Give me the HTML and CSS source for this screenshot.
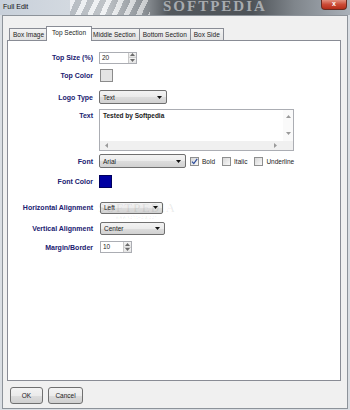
FILE: index.html
```html
<!DOCTYPE html>
<html lang="en">
<head>
    <meta charset="UTF-8">
    <title>Full Edit</title>
    <link rel="stylesheet" href="styles.css">
</head>
<body>
    <div class="titlebar">
        <span class="title">Full Edit</span>
        <span class="brand">SOFTPEDIA</span>
        <span class="close">x</span>
    </div>

    <div class="client">
        <div class="tabs">
            <div class="tab">Box Image</div>
            <div class="tab active">Top Section</div>
            <div class="tab">Middle Section</div>
            <div class="tab">Bottom Section</div>
            <div class="tab">Box Side</div>
        </div>

        <div class="panel">
            <div class="row row-size">
                <span class="label">Top Size (%)</span>
                <div class="spin spin-size">
                    <span class="spin-value">20</span>
                    <div class="spin-buttons">
                        <span class="spin-btn"><svg width="5" height="3" viewBox="0 0 5 3"><path d="M0 3L2.5 0L5 3Z" fill="#6b6b6b"/></svg></span>
                        <span class="spin-btn"><svg width="5" height="3" viewBox="0 0 5 3"><path d="M0 0L2.5 3L5 0Z" fill="#6b6b6b"/></svg></span>
                    </div>
                </div>
            </div>

            <div class="row row-color">
                <span class="label">Top Color</span>
                <span class="swatch swatch-top"></span>
            </div>

            <div class="row row-logo">
                <span class="label">Logo Type</span>
                <div class="combo combo-logo">
                    <span>Text</span>
                    <svg width="5" height="3" viewBox="0 0 5 3"><path d="M0 0L2.5 3L5 0Z" fill="#111"/></svg>
                </div>
            </div>

            <div class="row row-text">
                <span class="label label-top">Text</span>
                <div class="memo">
                    <div class="memo-text">Tested by Softpedia</div>
                    <div class="vscroll">
                        <svg width="5" height="3" viewBox="0 0 5 3"><path d="M0 3L2.5 0L5 3Z" fill="#9a9a9a"/></svg>
                        <svg width="5" height="3" viewBox="0 0 5 3"><path d="M0 0L2.5 3L5 0Z" fill="#9a9a9a"/></svg>
                    </div>
                    <div class="hscroll">
                        <svg width="3" height="5" viewBox="0 0 3 5"><path d="M3 0L0 2.5L3 5Z" fill="#9a9a9a"/></svg>
                        <svg width="3" height="5" viewBox="0 0 3 5"><path d="M0 0L3 2.5L0 5Z" fill="#9a9a9a"/></svg>
                    </div>
                    <div class="corner"></div>
                </div>
            </div>

            <div class="row row-font">
                <span class="label">Font</span>
                <div class="combo combo-font">
                    <span>Arial</span>
                    <svg width="5" height="3" viewBox="0 0 5 3"><path d="M0 0L2.5 3L5 0Z" fill="#111"/></svg>
                </div>
                <div class="checks">
                    <label class="check">
                        <span class="cb"><svg width="7" height="7" viewBox="0 0 7 7"><path d="M1 3.6L2.8 5.6L6.2 0.8" fill="none" stroke="#2c4c9c" stroke-width="1.2"/></svg></span>
                        Bold
                    </label>
                    <label class="check"><span class="cb"></span>Italic</label>
                    <label class="check"><span class="cb"></span>Underline</label>
                </div>
            </div>

            <div class="row row-fcolor">
                <span class="label">Font Color</span>
                <span class="swatch swatch-blue"></span>
            </div>

            <div class="row row-halign">
                <span class="label">Horizontal Alignment</span>
                <div class="combo combo-halign">
                    <span>Left</span>
                    <svg width="5" height="3" viewBox="0 0 5 3"><path d="M0 0L2.5 3L5 0Z" fill="#111"/></svg>
                </div>
            </div>

            <div class="row row-valign">
                <span class="label">Vertical Alignment</span>
                <div class="combo combo-valign">
                    <span>Center</span>
                    <svg width="5" height="3" viewBox="0 0 5 3"><path d="M0 0L2.5 3L5 0Z" fill="#111"/></svg>
                </div>
            </div>

            <div class="row row-margin">
                <span class="label">Margin/Border</span>
                <div class="spin spin-margin">
                    <span class="spin-value">10</span>
                    <div class="spin-buttons">
                        <span class="spin-btn"><svg width="5" height="3" viewBox="0 0 5 3"><path d="M0 3L2.5 0L5 3Z" fill="#6b6b6b"/></svg></span>
                        <span class="spin-btn"><svg width="5" height="3" viewBox="0 0 5 3"><path d="M0 0L2.5 3L5 0Z" fill="#6b6b6b"/></svg></span>
                    </div>
                </div>
            </div>

            <div class="watermark">
                <span class="wm-big">SOFTPEDIA</span>
                <span class="wm-small">www.softpedia.com</span>
            </div>
        </div>

        <div class="buttons">
            <button class="btn btn-ok">OK</button>
            <button class="btn btn-cancel">Cancel</button>
        </div>
    </div>
</body>
</html>
```

FILE: styles.css
```css
* {
    box-sizing: border-box;
}

body {
    margin: 0;
    width: 350px;
    height: 410px;
    overflow: hidden;
    background-color: #dadee3;
    font-family: 'Liberation Sans', Arial, sans-serif;
    font-size: 6.5px;
    color: #1a1a1a;
}

/* window caption */
.titlebar {
    height: 15px;
    display: flex;
    align-items: flex-start;
    overflow: hidden;
    background:
        repeating-linear-gradient(115deg, rgba(255, 255, 255, 0.55) 0 5px, rgba(130, 135, 140, 0.35) 5px 11px) 70px 0 / 80px 15px no-repeat,
        linear-gradient(90deg, #c8d0da 0, #d3d9e0 20%, #dfe3e7 30%, #9a9fa4 40%, #53585d 48%, #4e5358 72%, #7f858b 84%, #aab1b9 100%);
}

.title {
    flex: none;
    width: 163px;
    padding: 3px 0 0 3px;
    font-size: 7px;
    line-height: 8px;
    color: #111111;
}

.brand {
    margin-top: -1px;
    font-family: 'Liberation Serif', serif;
    font-weight: bold;
    font-size: 15px;
    line-height: 15px;
    letter-spacing: 2px;
    color: #a7abaf;
}

.close {
    width: 26px;
    height: 10px;
    margin-left: auto;
    margin-right: 3px;
    background: linear-gradient(#e3907f, #cb4a36 50%, #b52d19);
    border: 1px solid #6c2a20;
    border-top: none;
    border-radius: 0 0 4px 4px;
    color: #ffffff;
    font-size: 7px;
    font-weight: bold;
    line-height: 8px;
    text-align: center;
}

/* client area */
.client {
    margin: 0 2px 1px 2px;
    height: 394px;
    padding: 0 6px 0 4px;
    background-color: #f0f0f0;
    border: 1px solid #8d939a;
    display: flex;
    flex-direction: column;
}

.tabs {
    display: flex;
    align-items: flex-end;
    height: 14px;
    margin-top: 10px;
    padding-left: 2px;
}

.tab {
    height: 12px;
    padding: 0 3px;
    border: 1px solid #898c95;
    border-bottom: none;
    background: linear-gradient(#f3f3f3, #e2e2e2);
    line-height: 11px;
    white-space: nowrap;
}

.tab + .tab {
    margin-left: -1px;
}

.tab.active {
    position: relative;
    z-index: 1;
    height: 15px;
    margin: 0 -2px -1px -2px;
    padding: 0 5px;
    background: #ffffff;
    line-height: 11px;
}

.panel {
    position: relative;
    height: 341px;
    background-color: #ffffff;
    border: 1px solid #898c95;
    padding-top: 10px;
}

/* form rows */
.row {
    display: flex;
    align-items: center;
}

.row-size { height: 13px; }
.row-color { height: 14px; margin-top: 4px; }
.row-logo { height: 14px; margin-top: 8px; }
.row-text { height: 42px; margin-top: 5px; align-items: flex-start; }
.row-font { height: 14px; margin-top: 3px; }
.row-fcolor { height: 14px; margin-top: 6px; }
.row-halign { height: 13px; margin-top: 13px; }
.row-valign { height: 14px; margin-top: 7px; }
.row-margin { height: 14px; margin-top: 5px; }

.label {
    flex: none;
    width: 85px;
    margin-right: 6px;
    text-align: right;
    font-size: 7px;
    font-weight: bold;
    color: #20206f;
    white-space: nowrap;
}

.label-top {
    padding-top: 3px;
}

.spin {
    display: flex;
    height: 12px;
    border: 1px solid #abadb3;
    background-color: #ffffff;
}

.spin-size { width: 38px; }
.spin-margin { width: 32px; margin-left: 1px; }

.spin-value {
    flex: 1;
    padding-left: 2px;
    line-height: 10px;
}

.spin-buttons {
    width: 8px;
    display: flex;
    flex-direction: column;
    border-left: 1px solid #c9c9c9;
}

.spin-btn {
    flex: 1;
    display: flex;
    align-items: center;
    justify-content: center;
    background: linear-gradient(#f4f4f4, #e4e4e4);
}

.spin-btn + .spin-btn {
    border-top: 1px solid #d0d0d0;
}

.swatch {
    width: 13px;
    height: 13px;
    border: 1px solid #8b8b8b;
}

.swatch-top {
    margin-left: 1px;
    background-color: #e4e4e4;
}

.swatch-blue {
    background-color: #0000a2;
    border-color: #00005e;
}

.combo {
    display: flex;
    align-items: center;
    justify-content: space-between;
    height: 14px;
    padding: 0 4px 0 3px;
    border: 1px solid #707070;
    border-radius: 2px;
    background: linear-gradient(#f3f3f3, #ebebeb 50%, #dddddd 51%, #d1d1d1);
}

.combo-logo { width: 68px; }
.combo-font { width: 87px; }
.combo-halign { width: 63px; height: 12px; margin-left: 1px; }
.combo-valign { width: 65px; height: 13px; margin-left: 1px; }

.memo {
    width: 195px;
    height: 42px;
    border: 1px solid #abadb3;
    display: grid;
    grid-template-columns: 1fr 10px;
    grid-template-rows: 1fr 9px;
}

.memo-text {
    padding: 2px 3px;
    font-weight: bold;
    line-height: 8px;
}

.vscroll {
    display: flex;
    flex-direction: column;
    justify-content: space-between;
    align-items: center;
    padding: 5px 0 6px 0;
    background-color: #fafafa;
}

.hscroll {
    display: flex;
    justify-content: space-between;
    align-items: center;
    padding: 0 6px 0 5px;
    background-color: #f0f0f0;
}

.corner {
    background-color: #f0f0f0;
}

.checks {
    display: flex;
    align-items: center;
    gap: 7px;
    margin-left: 4px;
}

.check {
    display: flex;
    align-items: center;
    gap: 3px;
}

.cb {
    width: 9px;
    height: 9px;
    display: flex;
    align-items: center;
    justify-content: center;
    border: 1px solid #8e8f8f;
    background: linear-gradient(135deg, #d8d8d8, #f8f8f8);
}

/* screenshot watermark lying over the form */
.watermark {
    position: absolute;
    left: 90px;
    top: 161px;
    display: flex;
    flex-direction: column;
    align-items: center;
    pointer-events: none;
}

.wm-big {
    font-family: 'Liberation Serif', serif;
    font-weight: bold;
    font-size: 12px;
    line-height: 12px;
    letter-spacing: 1px;
    color: rgba(0, 0, 0, 0.07);
}

.wm-small {
    font-size: 5px;
    line-height: 6px;
    color: rgba(0, 0, 0, 0.07);
}

/* dialog buttons */
.buttons {
    display: flex;
    gap: 5px;
    margin-top: 6px;
    padding-left: 3px;
}

.btn {
    height: 17px;
    padding: 0;
    border: 1px solid #707070;
    border-radius: 3px;
    background: linear-gradient(#f3f3f3, #ebebeb 50%, #dddddd 51%, #cfcfcf);
    font-family: 'Liberation Sans', Arial, sans-serif;
    font-size: 6.5px;
    color: #1a1a1a;
}

.btn-ok { width: 33px; }
.btn-cancel { width: 35px; }
```
